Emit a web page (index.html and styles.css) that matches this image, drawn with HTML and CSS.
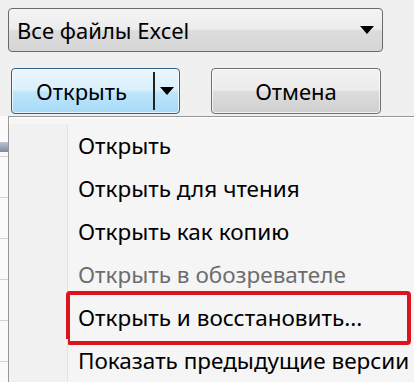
FILE: index.html
```html
<!DOCTYPE html>
<html lang="ru">
<head>
  <meta charset="UTF-8" />
  <title>Открыть файл</title>
  <link rel="stylesheet" href="styles.css">
</head>
<body>
  <div class="dialog">
    <div class="combo">
      <span>Все файлы Excel</span>
      <svg class="arrow" width="14" height="8" viewBox="0 0 14 8"><polygon points="0,0 14,0 7,8" fill="#000"/></svg>
    </div>

    <div class="buttons">
      <div class="btn btn-open">
        <span class="btn-label">Открыть</span>
        <span class="split"></span>
        <svg class="arrow" width="14" height="8" viewBox="0 0 14 8"><polygon points="0,0 14,0 7,8" fill="#000"/></svg>
      </div>
      <div class="btn btn-cancel">Отмена</div>
    </div>

    <div class="lower">
      <div class="sheet">
        <div class="sheet-sel"></div>
      </div>
      <div class="menu">
        <div class="item"><span class="gutter"></span><span class="label">Открыть</span></div>
        <div class="item"><span class="gutter"></span><span class="label">Открыть для чтения</span></div>
        <div class="item"><span class="gutter"></span><span class="label">Открыть как копию</span></div>
        <div class="item disabled"><span class="gutter"></span><span class="label">Открыть в обозревателе</span></div>
        <div class="item marked"><span class="gutter"></span><span class="label">Открыть и восстановить...</span></div>
        <div class="item"><span class="gutter"></span><span class="label">Показать предыдущие версии</span></div>
      </div>
    </div>
  </div>
</body>
</html>
```

FILE: styles.css
```css
body {
  margin: 0;
  background: #f0f0f0;
  font-family: 'Noto Sans', 'Open Sans', sans-serif;
  font-size: 22px;
  color: #000;
  overflow: hidden;
}

.dialog {
  width: 414px;
  height: 382px;
  display: flex;
  flex-direction: column;
}

.combo {
  margin: 8px 0 0 8px;
  width: 375px;
  height: 45px;
  box-sizing: border-box;
  border: 1px solid #6a6a6a;
  border-radius: 4px;
  background: linear-gradient(#f4f4f4 0%, #ececec 48%, #dcdcdc 52%, #d6d6d6 100%);
  display: flex;
  align-items: center;
  justify-content: space-between;
  padding: 0 8px 0 8px;
}

.buttons {
  display: flex;
  gap: 31px;
  margin: 16px 0 0 11px;
}

.btn {
  height: 46px;
  box-sizing: border-box;
  border-radius: 4px;
  display: flex;
  align-items: center;
  box-shadow: inset 0 0 0 1px rgba(255, 255, 255, 0.7);
}

.btn-open {
  width: 169px;
  border: 1px solid #2c628b;
  background: linear-gradient(#eaf6fd 0%, #d9f0fc 48%, #bee6fd 52%, #a7d9f5 100%);
  padding-left: 24px;
}

.btn-label {
  width: 117px;
}

.split {
  width: 2px;
  height: 38px;
  background: #222;
  margin-right: 5px;
}

.btn-cancel {
  width: 170px;
  border: 1px solid #707070;
  background: linear-gradient(#f2f2f2 0%, #ebebeb 48%, #dddddd 52%, #cfcfcf 100%);
  justify-content: center;
}

.lower {
  display: flex;
  margin-top: 2px;
  flex: 1;
}

.sheet {
  width: 8px;
  background: repeating-linear-gradient(#fafafa 0, #fafafa 40px, #d4d4d4 40px, #d4d4d4 41px);
  padding-top: 26px;
}

.sheet-sel {
  height: 10px;
  background: linear-gradient(#b9c4d6, #7d8aa0);
}

.menu {
  flex: 1;
  border-left: 1px solid #979797;
  border-top: 1px solid #979797;
  background: #f5f5f5;
  padding-top: 7px;
  box-shadow: inset 1px 1px 0 #fff;
  font-size: 22.5px;
}

.item {
  position: relative;
  height: 43px;
  display: flex;
  align-items: center;
}

.gutter {
  width: 58px;
  align-self: stretch;
  background: #f1f1f1;
  border-right: 1px solid #e2e3e3;
}

.label {
  padding-left: 10px;
  white-space: nowrap;
}

.disabled .label {
  color: #6d6d6d;
}

.marked::after {
  content: '';
  position: absolute;
  left: 57px;
  right: 3px;
  top: -5px;
  bottom: -6px;
  border: 4px solid #dc141e;
  border-radius: 4px;
}
```
